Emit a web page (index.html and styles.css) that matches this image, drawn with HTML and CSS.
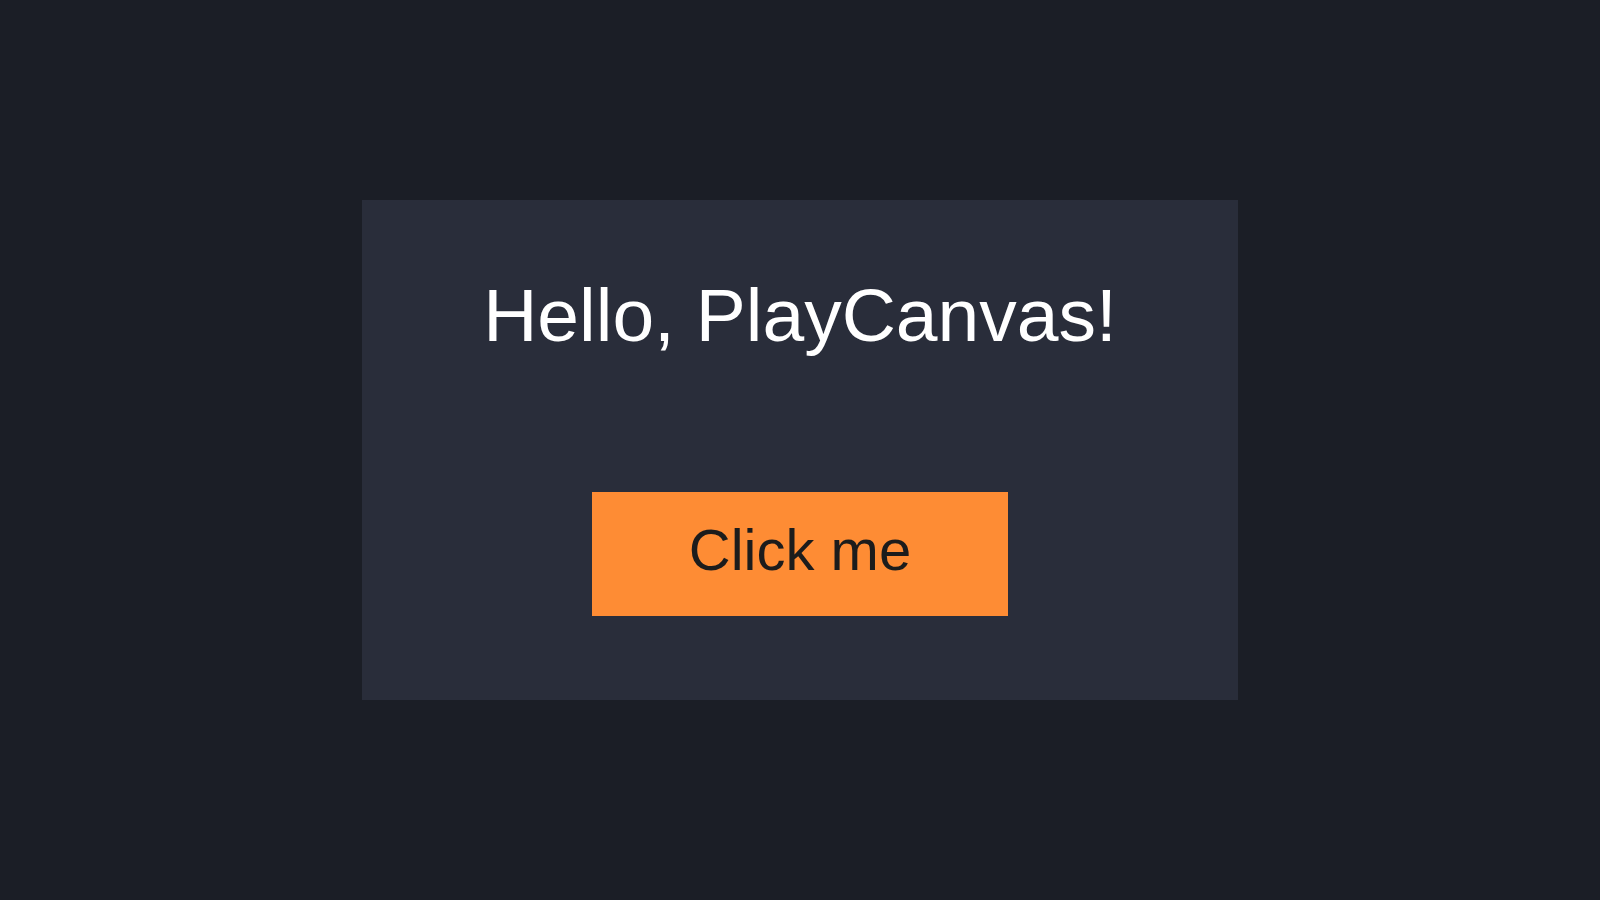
FILE: index.html
```html
<!DOCTYPE html>
<html lang="en">
<head>
<meta charset="utf-8">
<title>Hello, PlayCanvas!</title>
<link rel="stylesheet" href="styles.css">
</head>
<body>
  <main class="stage">
    <section class="panel">
      <h1 class="title">Hello, PlayCanvas!</h1>
      <button class="action" type="button">Click me</button>
    </section>
  </main>
</body>
</html>
```

FILE: styles.css
```css
html, body {
  margin: 0;
  padding: 0;
  height: 100%;
}

body {
  background: #1b1e26;
  font-family: "Liberation Sans", Arial, sans-serif;
}

.stage {
  height: 100%;
  display: flex;
  align-items: center;
  justify-content: center;
}

.panel {
  width: 876px;
  height: 500px;
  box-sizing: border-box;
  background: #292d3a;
  display: flex;
  flex-direction: column;
  align-items: center;
  padding-top: 78px;
}

.title {
  margin: 0;
  font-size: 75px;
  font-weight: normal;
  line-height: 75px;
  color: #ffffff;
}

.action {
  margin-top: 139px;
  width: 416px;
  height: 124px;
  box-sizing: border-box;
  padding: 0 0 8px 0;
  border: none;
  border-radius: 0;
  background: #fe8c34;
  color: #1c1c1c;
  font-family: "Liberation Sans", Arial, sans-serif;
  font-size: 58px;
  line-height: 58px;
  text-align: center;
}
```
